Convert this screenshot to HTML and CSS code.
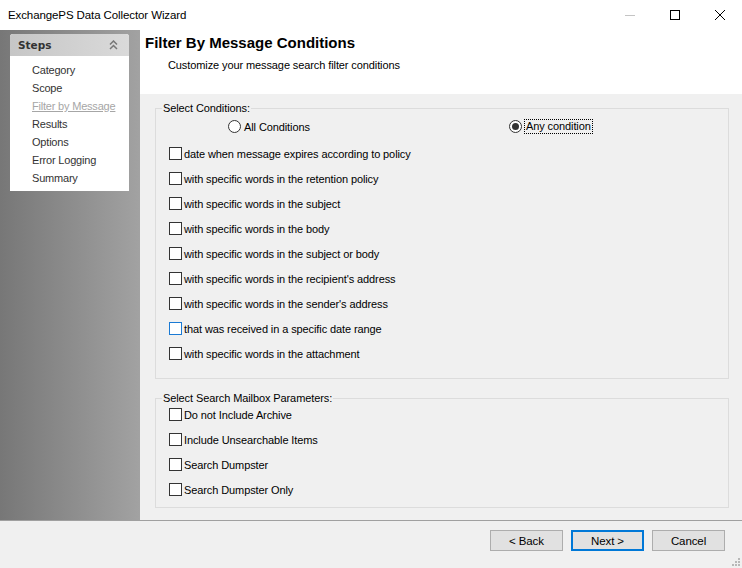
FILE: index.html
```html
<!DOCTYPE html>
<html>
<head>
	<meta charset="UTF-8">
	<title>ExchangePS Data Collector Wizard</title>
	<link rel="stylesheet" href="styles.css">
</head>
<body>
	<div class="window">
		<div class="titlebar">
			<span class="title">ExchangePS Data Collector Wizard</span>
			<div class="controls">
				<span class="ctl ctl-min"><svg width="12" height="12" viewBox="0 0 12 12"><path d="M1 6.5h10" stroke="#c4c4c4" stroke-width="1"/></svg></span>
				<span class="ctl"><svg width="12" height="12" viewBox="0 0 12 12"><rect x="1.5" y="1.5" width="9" height="9" fill="none" stroke="#000" stroke-width="1"/></svg></span>
				<span class="ctl"><svg width="12" height="12" viewBox="0 0 12 12"><path d="M1 1l10 10M11 1L1 11" stroke="#000" stroke-width="1"/></svg></span>
			</div>
		</div>

		<div class="body">
			<div class="sidebar">
				<div class="steps">
					<div class="steps-head">
						<span>Steps</span>
						<svg width="9" height="10" viewBox="0 0 9 10"><path d="M1 4.5l3.5-3.5 3.5 3.5M1 9l3.5-3.5 3.5 3.5" fill="none" stroke="#777" stroke-width="1.5"/></svg>
					</div>
					<ul class="steps-list">
						<li>Category</li>
						<li>Scope</li>
						<li class="current">Filter by Message</li>
						<li>Results</li>
						<li>Options</li>
						<li>Error Logging</li>
						<li>Summary</li>
					</ul>
				</div>
			</div>

			<div class="main">
				<div class="header">
					<h1>Filter By Message Conditions</h1>
					<p>Customize your message search filter conditions</p>
				</div>

				<div class="content">
					<fieldset class="group group-conditions">
						<legend>Select Conditions:</legend>
						<div class="radios">
							<label class="radio radio-all"><span class="dot"></span>All Conditions</label>
							<label class="radio radio-any checked"><span class="dot"></span><span class="focus">Any condition</span></label>
						</div>
						<label class="check"><span class="box"></span>date when message expires according to policy</label>
						<label class="check"><span class="box"></span>with specific words in the retention policy</label>
						<label class="check"><span class="box"></span>with specific words in the subject</label>
						<label class="check"><span class="box"></span>with specific words in the body</label>
						<label class="check"><span class="box"></span>with specific words in the subject or body</label>
						<label class="check"><span class="box"></span>with specific words in the recipient's address</label>
						<label class="check"><span class="box"></span>with specific words in the sender's address</label>
						<label class="check hover"><span class="box"></span>that was received in a specific date range</label>
						<label class="check"><span class="box"></span>with specific words in the attachment</label>
					</fieldset>

					<fieldset class="group group-params">
						<legend>Select Search Mailbox Parameters:</legend>
						<label class="check"><span class="box"></span>Do not Include Archive</label>
						<label class="check"><span class="box"></span>Include Unsearchable Items</label>
						<label class="check"><span class="box"></span>Search Dumpster</label>
						<label class="check"><span class="box"></span>Search Dumpster Only</label>
					</fieldset>
				</div>
			</div>
		</div>

		<div class="footer">
			<button class="btn">&lt; Back</button>
			<button class="btn btn-default">Next &gt;</button>
			<button class="btn">Cancel</button>
			<span class="grip"><svg width="8" height="8" viewBox="0 0 8 8" fill="#b8b8b8"><rect x="6" y="0" width="2" height="2"/><rect x="3" y="3" width="2" height="2"/><rect x="6" y="3" width="2" height="2"/><rect x="0" y="6" width="2" height="2"/><rect x="3" y="6" width="2" height="2"/><rect x="6" y="6" width="2" height="2"/></svg></span>
		</div>
	</div>
</body>
</html>
```

FILE: styles.css
```css
* {
	box-sizing: border-box;
}

body {
	margin: 0;
	font-family: "Liberation Sans", Arial, sans-serif;
	font-size: 11px;
	letter-spacing: -0.1px;
	color: #000;
	background: #f0f0f0;
}

.window {
	width: 742px;
	height: 568px;
	display: flex;
	flex-direction: column;
	background: #f0f0f0;
	overflow: hidden;
}

/* title bar */
.titlebar {
	height: 30px;
	flex: none;
	background: #fff;
	display: flex;
	align-items: center;
	padding-left: 8px;
}

.title {
	font-size: 11.5px;
	color: #000;
}

.controls {
	margin-left: auto;
	display: flex;
	height: 100%;
}

.ctl {
	width: 45px;
	display: flex;
	align-items: center;
	justify-content: center;
}

/* middle area */
.body {
	flex: none;
	height: 490px;
	display: flex;
}

.sidebar {
	width: 140px;
	flex: none;
	background: linear-gradient(to right, #777 0%, #8a8a8a 45%, #a2a2a2 100%);
	padding: 4px 11px 0 10px;
}

.steps {
	background: #fff;
	border-radius: 3px 3px 0 0;
}

.steps-head {
	height: 22px;
	display: flex;
	align-items: center;
	justify-content: space-between;
	padding: 0 11px 0 8px;
	background: linear-gradient(to right, #c6c6c6, #dadada);
	border-radius: 3px 3px 0 0;
	font-family: "DejaVu Sans", Tahoma, sans-serif;
	font-weight: bold;
	font-size: 10.5px;
	letter-spacing: 0;
	color: #333;
}

.steps-list {
	list-style: none;
	margin: 0;
	padding: 5px 0 4px 22px;
}

.steps-list li {
	height: 18px;
	line-height: 18px;
	font-size: 11px;
	letter-spacing: -0.2px;
	color: #333;
}

.steps-list li.current {
	color: #a6a6a6;
	text-decoration: underline;
}

.main {
	flex: 1;
	display: flex;
	flex-direction: column;
}

.header {
	height: 64px;
	flex: none;
	background: #fff;
	padding: 4px 0 0 5px;
}

.header h1 {
	margin: 0;
	font-size: 15px;
	line-height: 17px;
	font-weight: bold;
	letter-spacing: 0;
}

.header p {
	margin: 8px 0 0 23px;
}

.content {
	flex: 1;
	padding: 7px 13px 0 15px;
}

/* group boxes */
.group {
	margin: 0;
	padding: 0 0 0 6px;
	border: 1px solid #dcdcdc;
	border-radius: 0;
}

.group legend {
	padding: 0 1px;
	line-height: 14px;
}

.group-conditions {
	height: 278px;
}

.group-params {
	margin-top: 12px;
	height: 117px;
}

.radios {
	position: relative;
	height: 25px;
	padding-top: 4px;
}

.radio {
	display: flex;
	align-items: center;
	position: absolute;
	top: 5px;
}

.radio-all {
	left: 66px;
}

.radio-any {
	left: 347px;
}

.dot {
	width: 13px;
	height: 13px;
	border: 1px solid #333;
	border-radius: 50%;
	background: #fff;
	margin-right: 3px;
	position: relative;
}

.radio.checked .dot::after {
	content: "";
	position: absolute;
	left: 2px;
	top: 2px;
	width: 7px;
	height: 7px;
	border-radius: 50%;
	background: #333;
}

.focus {
	outline: 1px dotted #000;
	outline-offset: 0;
	padding: 0 1px;
	line-height: 13px;
}

.check {
	display: flex;
	align-items: center;
	height: 25px;
	padding-left: 7px;
}

.group-conditions .radios + .check {
	margin-top: 1px;
}

.group-params .check:first-of-type {
	margin-top: -3px;
}

.box {
	width: 13px;
	height: 13px;
	border: 1px solid #333;
	background: #fff;
	margin-right: 2px;
	flex: none;
}

.check.hover .box {
	border-color: #1a7ad4;
}

/* footer buttons */
.footer {
	flex: 1;
	border-top: 1px solid #a0a0a0;
	display: flex;
	align-items: flex-start;
	justify-content: flex-end;
	padding: 9px 17px 0 0;
	gap: 8px;
	position: relative;
}

.btn {
	width: 73px;
	height: 21px;
	background: #e1e1e1;
	border: 1px solid #adadad;
	font-family: "Liberation Sans", Arial, sans-serif;
	font-size: 11.5px;
	letter-spacing: -0.1px;
	color: #000;
	padding: 0;
	margin: 0;
}

.btn-default {
	border: 2px solid #0078d7;
}

.grip {
	position: absolute;
	right: 2px;
	bottom: 2px;
	line-height: 0;
}
```
